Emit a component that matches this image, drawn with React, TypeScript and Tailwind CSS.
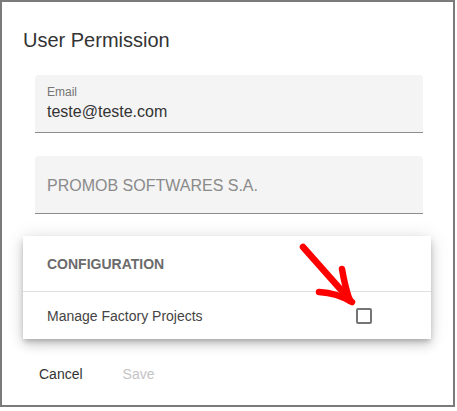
import React from "react";

function FilledField(props: { label?: string; value?: string; placeholder?: string }) {
  if (props.label) {
    return (
      <div className="h-[58px] rounded-t-[4px] border-b border-[#8c8c8c] bg-[#f4f4f4] px-3 pt-[9px]">
        <div className="text-[12px] leading-[16px] text-[#757575]">{props.label}</div>
        <div className="mt-[2px] text-[16px] leading-[20px] text-[#333333]">{props.value}</div>
      </div>
    );
  }
  return (
    <div className="flex h-[58px] items-center rounded-t-[4px] border-b border-[#8c8c8c] bg-[#f4f4f4] px-3 pt-[2px]">
      <span className="text-[16px] leading-[20px] text-[#8a8a8a]">{props.placeholder}</span>
    </div>
  );
}

export default function App() {
  return (
    <div className="h-[411px] w-[457px] bg-white font-['Liberation_Sans',Arial,sans-serif]">
      <div className="relative h-[407px] w-[455px] border-2 border-[#7b7b7b] bg-white px-[21px] pt-[22px]">
        <h2 className="text-[20px] leading-[32px] text-[#333333]">User Permission</h2>

        <div className="ml-[12px] mr-[9px] mt-[19px]">
          <FilledField label="Email" value="teste@teste.com" />
          <div className="mt-[23px]">
            <FilledField placeholder="PROMOB SOFTWARES S.A." />
          </div>
        </div>

        {/* Configuration card */}
        <div className="mt-[22px] mr-[1px] bg-white shadow-[0_3px_5px_-1px_rgba(0,0,0,0.2),0_6px_10px_0_rgba(0,0,0,0.14),0_1px_18px_0_rgba(0,0,0,0.12)]">
          <div className="flex h-[55px] items-center px-6 pt-[1px] text-[14px] font-bold text-[#6b6b6b]">
            CONFIGURATION
          </div>
          <div className="h-px bg-[#e0e0e0]" />
          <div className="flex h-[47px] items-center justify-between pl-6 pr-[59px] pt-[1px]">
            <span className="text-[14px] text-[#444444]">Manage Factory Projects</span>
            <span className="block h-4 w-4 rounded-[2px] border-2 border-[#757575]" />
          </div>
        </div>

        <div className="ml-[16px] mt-[25px] flex gap-[40px] text-[14px] leading-[20px]">
          <button className="text-[#333333]">Cancel</button>
          <button className="text-[#c4c4c4]" disabled>
            Save
          </button>
        </div>

        {/* red annotation arrow */}
        <svg
          className="pointer-events-none absolute left-[-2px] top-[-2px]"
          width="457"
          height="411"
          viewBox="0 0 457 411"
        >
          <g stroke="#ff0000" strokeWidth="6.5" strokeLinecap="round" strokeLinejoin="round" fill="none">
            <path d="M303 247 L350 300" />
            <path d="M319 292 Q337 293 352 302" />
            <path d="M342 269 Q345 287 350 301" />
          </g>
        </svg>
      </div>
    </div>
  );
}
